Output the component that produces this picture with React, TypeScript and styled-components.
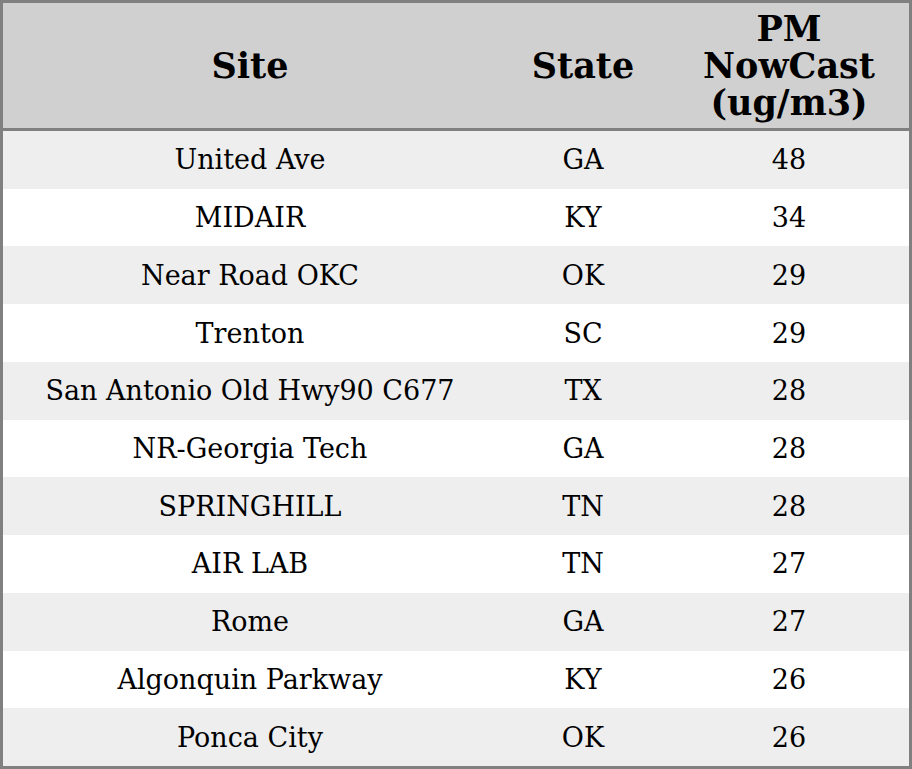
import React from 'react';
import styled, { createGlobalStyle } from 'styled-components';

interface SiteRow {
  site: string;
  state: string;
  pm: number;
}

const rows: SiteRow[] = [
  { site: 'United Ave', state: 'GA', pm: 48 },
  { site: 'MIDAIR', state: 'KY', pm: 34 },
  { site: 'Near Road OKC', state: 'OK', pm: 29 },
  { site: 'Trenton', state: 'SC', pm: 29 },
  { site: 'San Antonio Old Hwy90 C677', state: 'TX', pm: 28 },
  { site: 'NR-Georgia Tech', state: 'GA', pm: 28 },
  { site: 'SPRINGHILL', state: 'TN', pm: 28 },
  { site: 'AIR LAB', state: 'TN', pm: 27 },
  { site: 'Rome', state: 'GA', pm: 27 },
  { site: 'Algonquin Parkway', state: 'KY', pm: 26 },
  { site: 'Ponca City', state: 'OK', pm: 26 },
];

function App() {
  return (
    <>
      <GlobalStyle />
      <Table>
        <HeaderRow>
          <HeadCell>Site</HeadCell>
          <HeadCell>State</HeadCell>
          <HeadCell>
            PM
            <br />
            NowCast
            <br />
            (ug/m3)
          </HeadCell>
        </HeaderRow>
        {rows.map((row, i) => (
          <BodyRow key={row.site} striped={i % 2 === 0}>
            <Cell>{row.site}</Cell>
            <Cell>{row.state}</Cell>
            <Cell>{row.pm}</Cell>
          </BodyRow>
        ))}
      </Table>
    </>
  );
}

const GlobalStyle = createGlobalStyle`
  html, body {
    margin: 0;
    padding: 0;
    background: #fff;
  }
`;

const Table = styled.div`
  box-sizing: border-box;
  width: 912px;
  height: 769px;
  border: 3px solid #808080;
  display: grid;
  grid-template-rows: 128px repeat(11, 1fr);
  font-family: 'DejaVu Serif', serif;
  color: #000;
`;

const HeaderRow = styled.div`
  display: grid;
  grid-template-columns: 494px 172px 1fr;
  background: #d0d0d0;
  border-bottom: 3px solid #808080;
`;

const HeadCell = styled.div`
  display: flex;
  align-items: center;
  justify-content: center;
  text-align: center;
  font-weight: bold;
  font-size: 35px;
  line-height: 37px;
`;

const BodyRow = styled.div<{ striped: boolean }>`
  display: grid;
  grid-template-columns: 494px 172px 1fr;
  background: ${({ striped }) => (striped ? '#eeeeee' : '#ffffff')};
`;

const Cell = styled.div`
  display: flex;
  align-items: center;
  justify-content: center;
  font-size: 27px;
`;

export default App;
